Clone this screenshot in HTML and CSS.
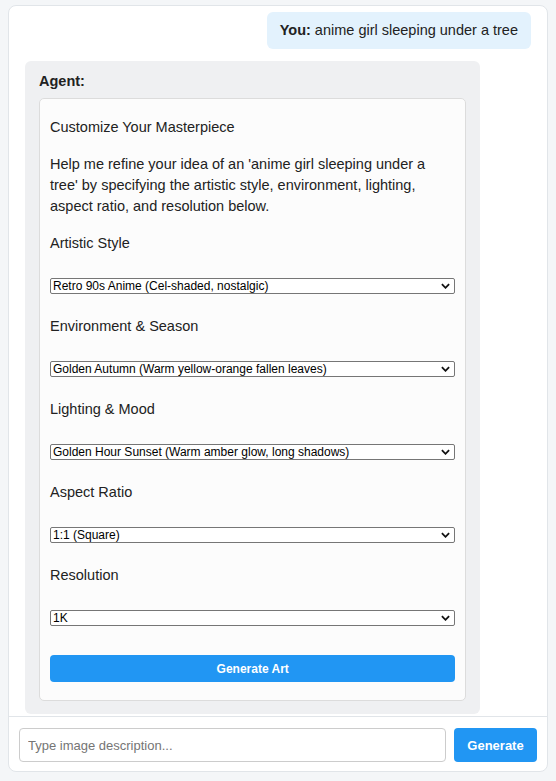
FILE: index.html
```html
<!DOCTYPE html>
<html>
<head>
    <meta charset="utf-8">
    <title>Image Agent</title>
    <link rel="stylesheet" href="styles.css">
</head>
<body>
    <div class="chat">
        <div class="messages">
            <div class="bubble user"><b>You:</b> anime girl sleeping under a tree</div>

            <div class="bubble agent">
                <div class="agent-name">Agent:</div>
                <div class="panel">
                    <p class="title">Customize Your Masterpiece</p>
                    <p class="intro">Help me refine your idea of an 'anime girl sleeping under a tree' by specifying the artistic style, environment, lighting, aspect ratio, and resolution below.</p>

                    <div class="field">
                        <div class="field-label">Artistic Style</div>
                        <div class="select-wrap">
                            <select>
                                <option>Retro 90s Anime (Cel-shaded, nostalgic)</option>
                            </select>
                            <svg class="chevron" viewBox="0 0 10 6"><path d="M1 1 L5 5 L9 1"/></svg>
                        </div>
                    </div>

                    <div class="field">
                        <div class="field-label">Environment &amp; Season</div>
                        <div class="select-wrap">
                            <select>
                                <option>Golden Autumn (Warm yellow-orange fallen leaves)</option>
                            </select>
                            <svg class="chevron" viewBox="0 0 10 6"><path d="M1 1 L5 5 L9 1"/></svg>
                        </div>
                    </div>

                    <div class="field">
                        <div class="field-label">Lighting &amp; Mood</div>
                        <div class="select-wrap">
                            <select>
                                <option>Golden Hour Sunset (Warm amber glow, long shadows)</option>
                            </select>
                            <svg class="chevron" viewBox="0 0 10 6"><path d="M1 1 L5 5 L9 1"/></svg>
                        </div>
                    </div>

                    <div class="field">
                        <div class="field-label">Aspect Ratio</div>
                        <div class="select-wrap">
                            <select>
                                <option>1:1 (Square)</option>
                            </select>
                            <svg class="chevron" viewBox="0 0 10 6"><path d="M1 1 L5 5 L9 1"/></svg>
                        </div>
                    </div>

                    <div class="field">
                        <div class="field-label">Resolution</div>
                        <div class="select-wrap">
                            <select>
                                <option>1K</option>
                            </select>
                            <svg class="chevron" viewBox="0 0 10 6"><path d="M1 1 L5 5 L9 1"/></svg>
                        </div>
                    </div>

                    <button class="generate-art">Generate Art</button>
                </div>
            </div>
        </div>

        <div class="composer">
            <input type="text" placeholder="Type image description...">
            <button class="send">Generate</button>
        </div>
    </div>
</body>
</html>
```

FILE: styles.css
```css
* {
    box-sizing: border-box;
}

body {
    margin: 5px 8px 0;
    background-color: #f4f6f8;
    font-family: "Liberation Sans", Arial, sans-serif;
    font-size: 14.5px;
    line-height: 21px;
    color: #222;
}

.chat {
    height: 767px;
    display: flex;
    flex-direction: column;
    background-color: #fff;
    border: 1px solid #e1e5e9;
    border-radius: 8px;
    overflow: hidden;
}

.messages {
    flex: 1;
    display: flex;
    flex-direction: column;
    gap: 12px;
    padding: 6px 16px 0;
    overflow: hidden;
}

.bubble {
    max-width: 90%;
    border-radius: 6px;
}

.bubble.user {
    align-self: flex-end;
    padding: 8px 13px;
    background-color: #e3f2fd;
}

.bubble.agent {
    align-self: flex-start;
    width: 90%;
    padding: 10px 14px 13px;
    background-color: #eff0f2;
}

.agent-name {
    font-weight: bold;
}

.panel {
    margin-top: 6px;
    padding: 18px 10px;
    background-color: #fcfcfc;
    border: 1px solid #dcdcdc;
    border-radius: 5px;
}

.panel p {
    margin: 0 0 16px;
}

.field + .field {
    margin-top: 22px;
}

.field-label {
    margin-bottom: 24px;
}

.select-wrap {
    position: relative;
}

.select-wrap select {
    display: block;
    width: 100%;
    height: 16px;
    padding: 0 2px;
    appearance: none;
    -webkit-appearance: none;
    background-color: #fff;
    border: 1px solid #767676;
    border-radius: 2px;
    font-family: "Liberation Sans", Arial, sans-serif;
    font-size: 12px;
    line-height: 14px;
    color: #000;
}

/* arrow on the right side of each dropdown */
.chevron {
    position: absolute;
    right: 5px;
    top: 5px;
    width: 9px;
    height: 6px;
    fill: none;
    stroke: #111;
    stroke-width: 2;
    pointer-events: none;
}

.generate-art {
    display: block;
    width: 100%;
    height: 27px;
    margin-top: 29px;
    border: none;
    border-radius: 4px;
    background-color: #2196f3;
    color: #fff;
    font-family: "Liberation Sans", Arial, sans-serif;
    font-size: 12px;
    font-weight: bold;
}

.composer {
    display: flex;
    gap: 8px;
    padding: 11px 10px 9px;
    border-top: 1px solid #e1e5e9;
}

.composer input {
    flex: 1;
    height: 34px;
    padding: 0 8px;
    border: 1px solid #ccc;
    border-radius: 4px;
    font-family: "Liberation Sans", Arial, sans-serif;
    font-size: 13px;
}

.composer input::placeholder {
    color: #757575;
}

.send {
    width: 83px;
    height: 34px;
    border: none;
    border-radius: 4px;
    background-color: #2196f3;
    color: #fff;
    font-family: "Liberation Sans", Arial, sans-serif;
    font-size: 13px;
    font-weight: bold;
}
```
